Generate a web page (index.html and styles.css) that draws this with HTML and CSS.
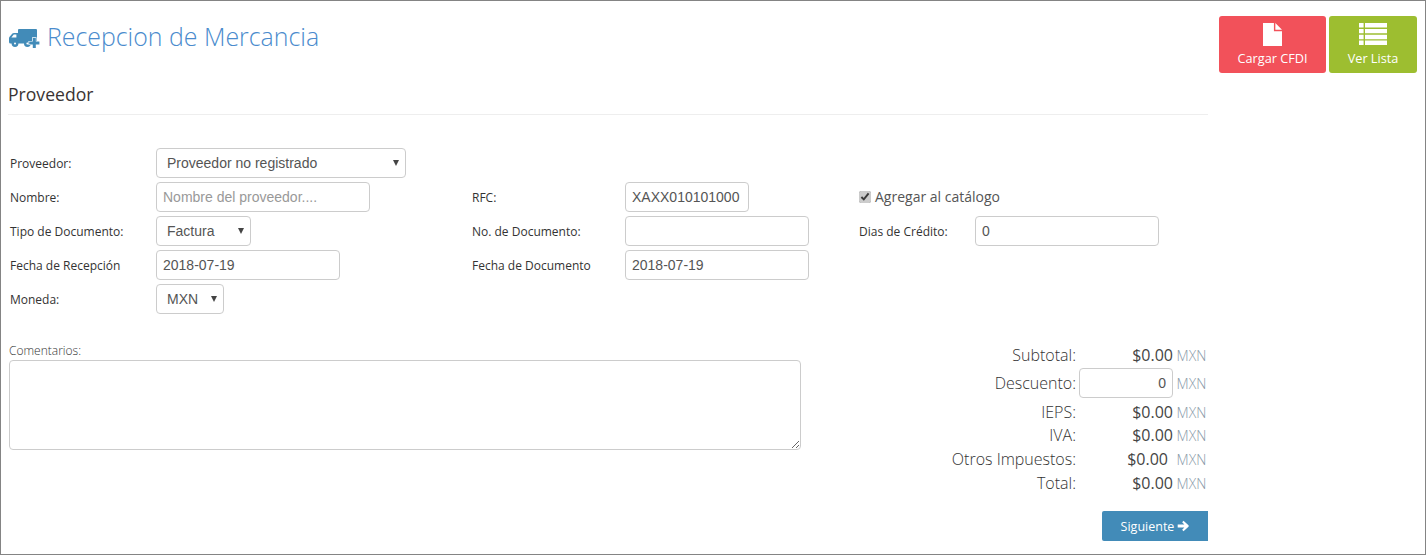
FILE: index.html
```html
<!DOCTYPE html>
<html lang="es">
<head>
<meta charset="utf-8">
<title>Recepcion de Mercancia</title>
<link rel="stylesheet" href="styles.css">
</head>
<body>
<div class="frame">
  <main class="main">
    <h1 class="title">
      <svg class="title-icon" viewBox="0 0 31 20" aria-hidden="true">
        <path fill="#428bb8" d="M9 2Q9 1 10 1H27Q28 1 28 2V15.5H1.5Q0 15.5 0 14V10.5Q0 9.5 .6 8.8L3.4 5.6Q4 5 5 5H9ZM7.4 6.6H4.8L2.4 9.6H7.4Z"/>
        <circle fill="#428bb8" cx="6" cy="15.6" r="3.4"/>
        <circle fill="#fff" cx="6" cy="15.6" r="1"/>
        <circle fill="#428bb8" cx="18.4" cy="15.6" r="3.4"/>
        <circle fill="#fff" cx="18.4" cy="15.6" r="1"/>
        <path fill="#428bb8" stroke="#fff" stroke-width="1.4" paint-order="stroke" d="M23.8 10H26.8V13.6H30.4V16.4H26.8V20H23.8V16.4H20.2V13.6H23.8Z"/>
      </svg>
      <span class="title-text">Recepcion de Mercancia</span>
    </h1>
    <h2 class="section-title">Proveedor</h2>

    <form class="form-grid">
      <label class="label">Proveedor:</label>
      <div class="select-wrap w-250 span-5"><select class="control"><option>Proveedor no registrado</option></select></div>

      <label class="label">Nombre:</label>
      <input class="control w-214" type="text" placeholder="Nombre del proveedor....">
      <label class="label">RFC:</label>
      <input class="control w-124" type="text" value="XAXX010101000">
      <label class="check span-2"><input class="check-box" type="checkbox" checked><span>Agregar al catálogo</span></label>

      <label class="label">Tipo de Documento:</label>
      <div class="select-wrap w-95"><select class="control"><option>Factura</option></select></div>
      <label class="label">No. de Documento:</label>
      <input class="control w-184" type="text">
      <label class="label">Dias de Crédito:</label>
      <input class="control w-184" type="text" value="0">

      <label class="label">Fecha de Recepción</label>
      <input class="control w-184" type="text" value="2018-07-19">
      <label class="label">Fecha de Documento</label>
      <input class="control w-184 span-3" type="text" value="2018-07-19">

      <label class="label">Moneda:</label>
      <div class="select-wrap w-68 span-5"><select class="control"><option>MXN</option></select></div>
    </form>

    <section class="lower">
      <div class="comments">
        <label class="comments-label">Comentarios:</label>
        <textarea class="comments-box"></textarea>
      </div>
      <div class="summary">
        <div class="totals">
          <span class="t-label">Subtotal:</span><span class="t-value">$0.00</span><span class="t-unit">MXN</span>
          <span class="t-label">Descuento:</span><input class="control t-input" type="text" value="0"><span class="t-unit">MXN</span>
          <span class="t-label">IEPS:</span><span class="t-value">$0.00</span><span class="t-unit">MXN</span>
          <span class="t-label">IVA:</span><span class="t-value">$0.00</span><span class="t-unit">MXN</span>
          <span class="t-label">Otros Impuestos:</span><span class="t-value t-value-shift">$0.00</span><span class="t-unit">MXN</span>
          <span class="t-label">Total:</span><span class="t-value">$0.00</span><span class="t-unit">MXN</span>
        </div>
        <button class="next" type="button">Siguiente
          <svg class="next-icon" viewBox="0 0 14 14" aria-hidden="true"><path fill="#fff" d="M7.6 1 13.4 6.2Q14 7 13.4 7.8L7.6 13 6 11.4 8.6 8.7H.8V5.3H8.6L6 2.6Z"/></svg>
        </button>
      </div>
    </section>
  </main>
  <aside class="actions">
    <button class="action action-red" type="button">
      <svg class="action-icon" viewBox="0 0 20 24" aria-hidden="true"><path fill="#fff" d="M0 0H11.5V8.5H20V24H0ZM13 0 20 7H13Z"/></svg>
      <span>Cargar CFDI</span>
    </button>
    <button class="action action-green" type="button">
      <svg class="action-icon" viewBox="0 0 28 22" aria-hidden="true"><path fill="#fff" d="M0 0H4.6V4.4H0ZM6 0H28V4.4H6ZM0 5.9H4.6V10.3H0ZM6 5.9H28V10.3H6ZM0 11.8H4.6V16.2H0ZM6 11.8H28V16.2H6ZM0 17.6H4.6V22H0ZM6 17.6H28V22H6Z"/></svg>
      <span>Ver Lista</span>
    </button>
  </aside>
</div>
</body>
</html>
```

FILE: styles.css
```css
* { box-sizing: border-box; }
html, body { margin: 0; padding: 0; background: #fff; }
body { font-family: "Open Sans", "Liberation Sans", sans-serif; color: #333; }

.frame {
  display: flex;
  height: 555px;
  width: 1426px;
  border: 1px solid #848484;
  overflow: hidden;
}
.main { width: 1207px; padding-left: 7px; flex: none; }

.title {
  display: flex;
  align-items: center;
  gap: 7px;
  height: 70px;
  margin: 0;
  padding: 0 0 0 1px;
  font-size: 24.9px;
  font-weight: 300;
  color: #4a8bcd;
}
.title-icon { width: 31px; height: 20px; flex: none; margin-top: 4px; }
.section-title {
  margin: 0;
  height: 44px;
  padding-top: 11px;
  font-size: 17.6px;
  line-height: 24px;
  font-weight: 400;
  color: #3a3333;
  border-bottom: 1px solid #eee;
}

.form-grid {
  display: grid;
  grid-template-columns: 146px 316px 153px 234px 116px 184px;
  grid-auto-rows: 30px;
  row-gap: 4px;
  align-items: center;
  margin-top: 33px;
  padding-left: 2px;
}
.label { font-size: 12px; line-height: 17px; color: #333; }
.control {
  display: block;
  height: 30px;
  padding: 0 6px;
  font-family: "Liberation Sans", Arial, sans-serif;
  font-size: 14px;
  color: #555;
  background: #fff;
  border: 1px solid #ccc;
  border-radius: 4px;
  outline: none;
}
.control::placeholder { color: #999; opacity: 1; }
.w-124 { width: 124px; }
.w-184 { width: 184px; }
.w-214 { width: 214px; }
.span-2 { grid-column: span 2; }
.span-3 { grid-column: span 3; }
.span-5 { grid-column: span 5; }
.select-wrap { position: relative; height: 30px; }
.select-wrap .control { width: 100%; padding: 0 10px; appearance: none; -webkit-appearance: none; }
.select-wrap::after {
  content: "";
  position: absolute;
  right: 7px;
  top: 12px;
  border-left: 3px solid transparent;
  border-right: 3px solid transparent;
  border-top: 6px solid #444;
  pointer-events: none;
}
.w-250 { width: 250px; }
.w-95 { width: 95px; }
.w-68 { width: 68px; }
.check {
  display: flex;
  align-items: center;
  gap: 4px;
  margin-top: -2px;
  font-size: 14px;
  color: #555;
}
.check-box { width: 12px; height: 12px; margin: 1px 0 0; accent-color: #ccc; }

.lower {
  display: flex;
  justify-content: space-between;
  margin-top: 28px;
}
.comments { padding-left: 1px; }
.comments-label {
  display: block;
  height: 18px;
  font-size: 12px;
  font-weight: 300;
  line-height: 17px;
  color: #333;
}
.comments-box {
  display: block;
  width: 792px;
  height: 90px;
  border: 1px solid #ccc;
  border-radius: 4px;
  outline: none;
}
.summary { display: flex; flex-direction: column; align-items: flex-end; }
.totals {
  display: grid;
  grid-template-columns: auto 97px 35px;
  grid-template-rows: 25px 32px 25px 22px 25px 23px;
  align-items: center;
}
.t-label { font-size: 16px; font-weight: 300; text-align: right; line-height: 22px; }
.t-value { font-size: 16px; font-weight: 400; text-align: right; line-height: 22px; color: #444; }
.t-value-shift { padding-right: 5px; }
.t-unit { font-size: 14px; font-weight: 300; padding: 2px 0 0 3.6px; color: #8a9aa8; line-height: 20px; white-space: nowrap; }
.t-input { width: 94px; margin-left: 3px; text-align: right; }
.next {
  display: flex;
  align-items: center;
  justify-content: center;
  gap: 3px;
  width: 106px;
  height: 30px;
  margin-top: 17px;
  padding: 0;
  font-family: inherit;
  font-size: 12.5px;
  color: #fff;
  background: #428bb8;
  border: 0;
  border-radius: 2px 0 0 2px;
}
.next-icon { width: 12px; height: 12px; }

.actions {
  display: flex;
  gap: 3px;
  align-items: flex-start;
  margin-left: 11px;
  padding-top: 15px;
}
.action {
  display: flex;
  flex-direction: column;
  align-items: center;
  height: 57px;
  padding: 6px 0 0;
  font-family: inherit;
  font-size: 12.7px;
  line-height: 17px;
  color: #fff;
  border: 0;
  border-radius: 3px;
}
.action-red { width: 107px; background: #f2515a; }
.action-green { width: 88px; background: #9dbe30; }
.action-icon { height: 22px; margin-top: 1px; margin-bottom: 5px; }
.action-red .action-icon { width: 19px; height: 23px; margin-bottom: 4px; }
.action-green .action-icon { width: 28px; }
```
